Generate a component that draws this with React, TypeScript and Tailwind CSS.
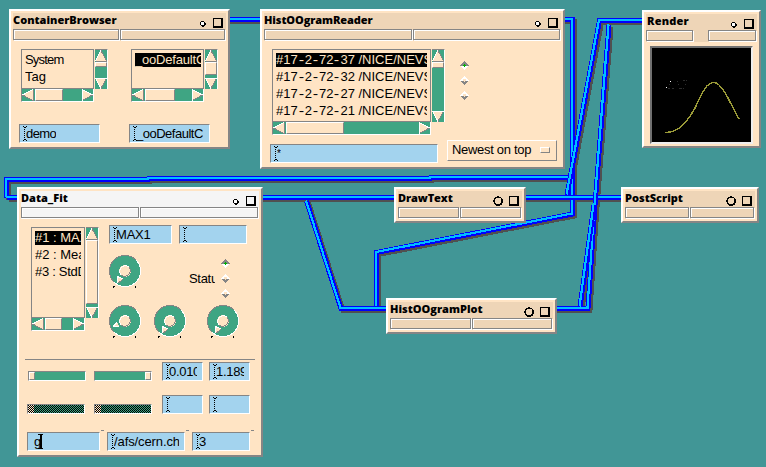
import type { ReactNode } from 'react';

const SANS = "font-['Liberation_Sans',Arial,sans-serif]";

/* ---------- wires ---------- */

const WIRES = [
  '228,19.5 262,19.5',
  '563,19.5 572.5,19.5 572.5,214 376.5,252.5 376.5,309',
  '6.5,197.5 6.5,179.5 148,179.5 149,178.5 430,178.5 431,177.5 568,177.5',
  '6.5,197.5 20,197.5',
  '260,197.5 396,197.5',
  '524,197.5 623,197.5',
  '306.5,201 341,308.5 388,308.5',
  '644,20.5 599.5,20.5 567,195',
  '609,25 595,205 588,308.5 555,308.5',
  '594,205 580,307',
];

function Wires() {
  return (
    <svg className="absolute inset-0" width="766" height="467" fill="none" shapeRendering="crispEdges">
      <g stroke="#505050" strokeWidth="5" transform="translate(2 2)">
        {WIRES.map((p) => <polyline key={p} points={p} />)}
      </g>
      {WIRES.map((p) => (
        <g key={p}>
          <polyline points={p} stroke="#0000ff" strokeWidth="5" />
          <polyline points={p} stroke="#00bfff" strokeWidth="2.2" transform="translate(-0.5 -0.5)" />
        </g>
      ))}
    </svg>
  );
}

/* ---------- window frame ---------- */

type WindowProps = {
  place: string;
  title: string;
  titleClass?: string;
  tone?: string;
  bigDot?: boolean;
  bars?: ReactNode;
  children?: ReactNode;
};

function Bar({ className = 'flex-1' }: { className?: string }) {
  return (
    <div
      className={`h-[11px] border border-[#858585] shadow-[1px_1px_0_#fff,inset_1px_1px_0_#fff] ${className}`}
    />
  );
}

function Window({ place, title, titleClass = '', tone = 'bg-[#eed5b7]', bigDot, bars, children }: WindowProps) {
  return (
    <section
      className={`absolute flex flex-col border-2 border-t-white border-l-white border-r-[#858585] border-b-[#858585] bg-[#ffe4c4] p-[2px] ${place}`}
    >
      <header className={`h-7 shrink-0 ${tone}`}>
        <div className="flex h-4 justify-between">
          <h2
            className={`font-['Open_Sans','Noto_Sans',sans-serif] text-[11px] leading-[13px] font-extrabold whitespace-nowrap ${titleClass}`}
          >
            {title}
          </h2>
          <div className="flex shrink-0 gap-[5px] pt-[5px] pr-[3px]">
            <svg width="11" height="11" shapeRendering="crispEdges" fill="none" stroke="#000">
              {bigDot ? (
                <>
                  <circle cx="5" cy="5" r="4" strokeWidth="1.3" />
                  <path d="M3 9.5h4M7 8.500h2M8.500 8V6M9.500 7V3" />
                </>
              ) : (
                <>
                  <circle cx="5.5" cy="5.5" r="2" strokeWidth="1.3" fill="#fff" />
                  <path d="M5 8h2M7 7.500h1M8 7V5" />
                </>
              )}
            </svg>
            <div className="h-[10px] w-[10px] border border-r-2 border-b-2 border-black" />
          </div>
        </div>
        {bars ?? (
          <div className="flex gap-px pr-px">
            <Bar />
            <Bar />
          </div>
        )}
      </header>
      {children}
    </section>
  );
}

/* ---------- widgets ---------- */

const ARROWS = {
  up: { face: '6,0.5 11.5,11 0.5,11', light: '0.5,11 6,0.5', dark: '6,0.5 11.5,11 0.5,11' },
  down: { face: '0.5,1 11.5,1 6,11.5', light: '6,11.5 0.5,1 11.5,1', dark: '11.5,1 6,11.5' },
  left: { face: '0.5,6 11,0.5 11,11.5', light: '0.5,6 11,0.5', dark: '11,0.5 11,11.5 0.5,6' },
  right: { face: '1,0.5 11.5,6 1,11.5', light: '11.5,6 1,0.5 1,11.5', dark: '1,11.5 11.5,6' },
};

function Arrow({ dir }: { dir: keyof typeof ARROWS }) {
  const a = ARROWS[dir];
  return (
    <svg width="12" height="12" className="shrink-0" fill="none" shapeRendering="crispEdges">
      <polygon points={a.face} fill="#ffe4c4" />
      <polyline points={a.dark} stroke="#858585" />
      <polyline points={a.light} stroke="#fff" />
    </svg>
  );
}

const RAISED = 'border border-t-white border-l-white border-r-[#858585] border-b-[#858585]';
const SUNKEN = 'border border-t-[#858585] border-l-[#858585] border-r-white border-b-white';

function VScroll({ thumb }: { thumb: string }) {
  return (
    <div className="ml-px flex w-[13px] shrink-0 flex-col border-t border-r border-t-[#858585] border-r-white bg-[#3fa583]">
      <Arrow dir="up" />
      <div className={`${RAISED} bg-[#ffe4c4] ${thumb}`} />
      <div className="mt-auto flex">
        <Arrow dir="down" />
      </div>
    </div>
  );
}

function HScroll({ thumb }: { thumb: string }) {
  return (
    <div className="flex h-[13px] border-b border-l border-b-white border-l-[#858585] bg-[#3fa583]">
      <Arrow dir="left" />
      <div className={`ml-px ${RAISED} bg-[#ffe4c4] ${thumb}`} />
      <div className="ml-auto flex border-r border-white">
        <Arrow dir="right" />
      </div>
    </div>
  );
}

type ListProps = {
  className: string;
  boxClass: string;
  vThumb: string;
  hThumb: string;
  children: ReactNode;
};

function ScrollList({ className, boxClass, vThumb, hThumb, children }: ListProps) {
  return (
    <div className={`flex shrink-0 flex-col ${className}`}>
      <div className="flex flex-1">
        <ul
          className={`${SANS} flex shrink-0 flex-col gap-[3px] border border-[#858585] pt-[3px] pl-[3px] text-[13px] leading-[14px] ${boxClass}`}
        >
          {children}
        </ul>
        <VScroll thumb={vThumb} />
      </div>
      <div className="flex">
        <div className={boxClass}>
          <HScroll thumb={hThumb} />
        </div>
      </div>
    </div>
  );
}

function Item({ selected, className = '', children }: { selected?: boolean; className?: string; children: ReactNode }) {
  return (
    <li
      className={`h-[14px] overflow-hidden whitespace-nowrap ${selected ? 'bg-black text-[#ffe4c4]' : 'text-black'} ${className}`}
    >
      {children}
    </li>
  );
}

function RunName({ text }: { text: string }) {
  return (
    <>
      {text.split(/(-)/).map((part, i) =>
        part === '-' ? (
          <span key={i} className="inline-block w-[7px] scale-x-125 text-center">-</span>
        ) : (
          <span key={i}>{part}</span>
        ),
      )}
    </>
  );
}

function Caret() {
  return (
    <svg width="4" height="15" className="mt-px shrink-0" shapeRendering="crispEdges" fill="#000">
      <path d="M0 0h1v1h-1zM3 0h1v1h-1zM1 1h2v1h-2zM1 13h2v1h-2zM0 14h1v1h-1zM3 14h1v1h-1z" />
      <path d="M1.500 3v10" stroke="#000" strokeDasharray="1 1" />
    </svg>
  );
}

function Field({ className, text = '', textClass = '', active }: { className: string; text?: string; textClass?: string; active?: boolean }) {
  return (
    <div
      className={`${SANS} ${SUNKEN} flex h-[19px] shrink-0 bg-[#a3d3ee] pr-[5px] pl-[3px] text-[13px] leading-[18px] text-black ${className}`}
    >
      {!active && <Caret />}
      <span className={`overflow-hidden whitespace-nowrap ${active ? 'pl-[3px]' : '-ml-px'} ${textClass}`}>{text}</span>
      {active && (
        <svg width="5" height="15" className="-ml-[3px] mt-px shrink-0" shapeRendering="crispEdges" fill="#000">
          <path d="M0 0h5v1h-5zM2 1h2v13h-2zM0 14h5v1h-5z" />
        </svg>
      )}
    </div>
  );
}

function Diamond({ on }: { on?: boolean }) {
  return (
    <svg width="9" height="9" shapeRendering="crispEdges">
      <polygon points="4.5,0 9,4.5 0,4.5" fill={on ? '#858585' : '#fff'} />
      <polygon points="0,4.5 9,4.5 4.5,9" fill={on ? '#fff' : '#858585'} />
      {on ? (
        <path d="M3 4h3v1h-3zM4 3h1v3h-1z" fill="#00b000" />
      ) : (
        <path d="M3 3h3v2h-1v1h-1v-1h-1z" fill="#ffe4c4" />
      )}
    </svg>
  );
}

function Diamonds({ className }: { className: string }) {
  return (
    <div className={`flex shrink-0 flex-col gap-[6px] ${className}`}>
      <Diamond on />
      <Diamond />
      <Diamond />
    </div>
  );
}

function Knob({ className = '', low }: { className?: string; low?: boolean }) {
  return (
    <svg width="33" height="35" className={`shrink-0 ${className}`} fill="none" shapeRendering="crispEdges">
      <circle cx="16" cy="16" r="15.5" fill="#3fa583" />
      <path d="M27 5A15.5 15.5 0 0 1 5 27" stroke="#fff" />
      <path d="M5 27A15.5 15.5 0 0 1 27 5" stroke="#858585" />
      <circle cx="16" cy="16" r="6" fill="#ffe4c4" />
      <path d="M20 12A5.700 5.700 0 0 0 12 20" stroke="#fff" />
      <path d="M12 20A5.700 5.700 0 0 0 20 12" stroke="#858585" />
      {low ? (
        <>
          <polygon points="8,17 10,21 4,21.5" fill="#ffe4c4" />
          <path d="M10 21.5H4M4.500 21L8 17.500" stroke="#fff" />
        </>
      ) : (
        <>
          <polygon points="8,21 14,24 9,28" fill="#ffe4c4" />
          <path d="M8.500 28V21.500L14 24" stroke="#fff" />
          <path d="M14 24.500L9 28" stroke="#858585" />
        </>
      )}
      <path d="M5.500 31L4 33M26 31v2" stroke="#000" />
    </svg>
  );
}

function Slider({ end }: { end?: boolean }) {
  return (
    <div className={`${SUNKEN} flex h-[10px] w-[58px] shrink-0 bg-[#3fa583] ${end ? 'justify-end' : ''}`}>
      <div className="h-full w-[6px] border border-t-white border-l-white border-r-[#858585] border-b-[#858585] bg-[#ffe4c4]" />
    </div>
  );
}

function DisabledSlider({ id }: { id: string }) {
  return (
    <div className={`${SUNKEN} h-[10px] w-[58px] shrink-0`}>
      <svg width="56" height="8" className="block" shapeRendering="crispEdges">
        <defs>
          <pattern id={id} width="2" height="2" patternUnits="userSpaceOnUse">
            <path d="M0 0h1v1h-1zM1 1h1v1h-1z" fill="#000" />
          </pattern>
        </defs>
        <rect width="56" height="8" fill="#3fa583" />
        <rect width="6" height="8" fill="#ffe4c4" />
        <rect width="56" height="8" fill={`url(#${id})`} />
      </svg>
    </div>
  );
}

/* ---------- page ---------- */

const RUNS = ['#17-2-72-37 /NICE/NEVS', '#17-2-72-32 /NICE/NEVS', '#17-2-72-27 /NICE/NEVS', '#17-2-72-21 /NICE/NEVS'];

export default function App() {
  return (
    <main className="relative h-[467px] w-[766px] overflow-hidden bg-[#419696] text-black">
      <Wires />

      <Window place="left-[9px] top-[9px] w-[221px] h-[140px]" title="ContainerBrowser">
        <div className="flex gap-6 pt-2 pl-2">
          <ScrollList className="h-[53px] w-[86px]" boxClass="w-[73px]" vThumb="h-[5px]" hThumb="w-[28px]">
            <Item className="tracking-[-0.8px]">System</Item>
            <Item>Tag</Item>
          </ScrollList>
          <ScrollList className="h-[53px] w-[86px]" boxClass="w-[73px]" vThumb="h-[13px]" hThumb="w-[30px]">
            <Item selected className="w-[66px] tracking-[-0.2px]">_ooDefaultC</Item>
          </ScrollList>
        </div>
        <div className="flex gap-[29px] pt-[22px] pl-[6px]">
          <Field className="w-[81px]" text="demo" textClass="tracking-[-0.6px]" />
          <Field className="w-[81px]" text="_ooDefaultC" textClass="tracking-[-0.5px]" />
        </div>
      </Window>

      <Window place="left-[260px] top-[9px] w-[305px] h-[160px]" title="HistOOgramReader" titleClass="tracking-[-0.1px]">
        <div className="flex pt-2 pl-2">
          <ScrollList className="h-[86px] w-[172px]" boxClass="w-[159px]" vThumb="h-[6px]" hThumb="w-[58px]">
            {RUNS.map((run, i) => (
              <Item key={run} selected={i === 0} className="w-[151px]">
                <RunName text={run} />
              </Item>
            ))}
          </ScrollList>
          <Diamonds className="ml-[16px] pt-3" />
        </div>
        <div className="-mt-px flex pt-[6px] pl-[6px]">
          <Field className="mt-1 w-[168px]" text="*" textClass="text-[10px]" />
          <button
            type="button"
            className={`${SANS} ${RAISED} ml-[9px] flex h-[21px] w-[110px] items-center justify-between pr-[6px] pb-[2px] pl-1 text-[13px] leading-[18px] tracking-[-0.3px] whitespace-nowrap`}
          >
            Newest on top
            <span className={`${RAISED} h-[6px] w-[10px]`} />
          </button>
        </div>
      </Window>

      <Window
        place="left-[642px] top-[10px] w-[119px] h-[138px]"
        title="Render"
        titleClass="pl-px tracking-[0.2px]"
        bars={
          <div className="flex justify-between pr-px">
            <Bar className="w-[47px]" />
            <Bar className="w-[48px]" />
          </div>
        }
      >
        <div className="mt-1 ml-1 h-[98px] w-[103px] border-2 border-t-[#707070] border-l-[#707070] border-r-[#eee] border-b-[#eee] bg-black">
          <svg width="99" height="94" className="block" shapeRendering="crispEdges" fill="none">
            <path
              d="M13 84.500C26 84.500 34 76 43 60C50 46 53 38 58 35.500C61 34 64 34 67 37C75 44 79 58 87 71"
              stroke="#9a9a38"
              strokeWidth="1.4"
            />
            <path d="M18 33h1v1h-1zM14 39h1v1h-1z" fill="#fff" />
            <path
              d="M17 36.500h1M25 33.500h1M31 32.500h2M34 32.500h1M26 36.500h1M33 36.500h1M16 40.500h2M20 40.500h2M27 40.500h3M31 40.500h1"
              stroke="#2c2c2c"
            />
          </svg>
        </div>
      </Window>

      <Window place="left-[17px] top-[187px] w-[246px] h-[270px]" title="Data_Fit" tone="bg-[#f5f5f5]">
        <div className="flex h-[140px] shrink-0 pl-[10px]">
          <ScrollList className="mt-2 h-[104px] w-[67px]" boxClass="w-[54px]" vThumb="h-[64px]" hThumb="w-[17px]">
            <Item selected className="w-[46px]">#1 : MAX</Item>
            <Item className="w-[46px]">#2 : Mean</Item>
            <Item className="w-[46px] tracking-[-0.3px]">#3 : StdDev</Item>
          </ScrollList>
          <div className="ml-[11px] flex flex-col pt-[6px]">
            <div className="flex gap-[7px]">
              <Field className="w-[63px]" text="MAX1" textClass="tracking-[-0.2px]" />
              <Field className="w-[68px]" />
            </div>
            <div className="mt-[11px] flex h-[50px]">
              <Knob />
              <span className={`${SANS} ml-[47px] w-[26px] overflow-hidden pt-4 text-[13px] leading-4 tracking-[-0.3px] whitespace-nowrap`}>
                Status
              </span>
              <Diamonds className="ml-[6px] pt-1" />
            </div>
            <div className="flex">
              <Knob low />
              <Knob className="ml-3" />
              <Knob className="ml-5" />
            </div>
          </div>
        </div>
        <div className="mx-1 h-px shrink-0 bg-[#858585]" />
        <div className="mt-[2px] flex items-end pl-[7px]">
          <Slider />
          <div className="w-2" />
          <Slider end />
          <div className="w-[10px]" />
          <Field className="w-[41px]" text="0.010" textClass="tracking-[-0.3px]" />
          <div className="w-[6px]" />
          <Field className="w-[41px]" text="1.189" textClass="tracking-[-0.3px]" />
        </div>
        <div className="mt-[14px] flex items-end pl-[6px]">
          <DisabledSlider id="stipple-a" />
          <div className="w-[9px]" />
          <DisabledSlider id="stipple-b" />
          <div className="w-[10px]" />
          <Field className="w-[41px]" />
          <div className="w-[6px]" />
          <Field className="w-[41px]" />
        </div>
        <div className="mt-[17px] flex pl-[80px]">
          <div className="-mt-px h-px w-[3px] bg-[#858585]" />
          <div className="-mt-px ml-[82px] h-px w-[3px] bg-[#858585]" />
          <div className="-mt-px ml-[62px] h-px w-[3px] bg-[#858585]" />
        </div>
        <div className="flex gap-[7px] pt-px pl-[6px]">
          <Field className="w-[73px]" text="g" active />
          <Field className="w-[78px]" text="/afs/cern.ch" textClass="tracking-[-0.1px]" />
          <Field className="w-[58px]" text="3" />
        </div>
      </Window>

      <Window place="left-[394px] top-[187px] w-[132px] h-[36px]" title="DrawText" titleClass="tracking-[-0.1px]" bigDot />
      <Window place="left-[621px] top-[187px] w-[138px] h-[36px]" title="PostScript" bigDot />
      <Window place="left-[386px] top-[298px] w-[171px] h-[36px]" title="HistOOgramPlot" bigDot />
    </main>
  );
}
